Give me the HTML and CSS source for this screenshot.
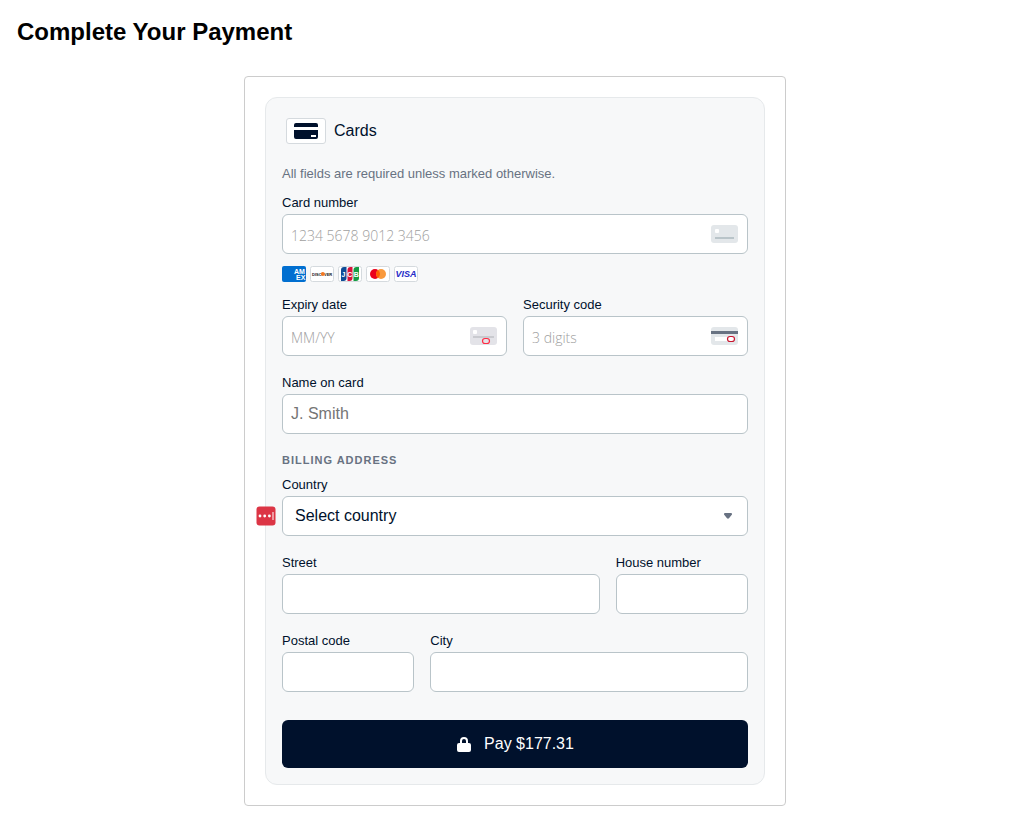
FILE: index.html
```html
<!DOCTYPE html>
<html lang="en">

<head>
    <meta charset="utf-8">
    <title>Complete Your Payment</title>
    <meta name="viewport" content="width=device-width, initial-scale=1">
    <link rel="stylesheet" href="styles.css">
</head>

<body>
    <h1>Complete Your Payment</h1>

    <main class="payment-container">
        <form class="card-panel" action="#" method="post">
            <div class="method-header">
                <span class="method-icon">
                    <svg width="38" height="24" viewBox="0 0 38 24" aria-hidden="true">
                        <path fill="#00112c" d="M7 8V6Q7 4 9 4H29Q31 4 31 6V8zM7 11H31V18Q31 20 29 20H9Q7 20 7 18z" />
                        <path fill="#fff" d="M24 16h5v2h-5z" />
                    </svg>
                </span>
                <h2>Cards</h2>
            </div>

            <p class="form-instruction">All fields are required unless marked otherwise.</p>

            <div class="field">
                <label for="cardNumber">Card number</label>
                <div class="input-wrapper">
                    <input class="secured" id="cardNumber" type="text" inputmode="numeric" placeholder="1234 5678 9012 3456">
                    <svg class="field-icon" width="27" height="18" viewBox="0 0 27 18" aria-hidden="true">
                        <rect width="27" height="18" rx="3" fill="#e3e7ea" />
                        <rect x="4" y="4" width="4" height="4" rx="1" fill="#fff" />
                        <path fill="#b9c4c9" d="M4 12h19v2H4z" />
                    </svg>
                </div>
            </div>

            <div class="brands">
                <svg width="24" height="16" viewBox="0 0 24 16" role="img" aria-label="American Express">
                    <rect width="24" height="16" rx="2" fill="#016fd0" />
                    <g class="amex-text">
                        <text x="12" y="8">AM</text>
                        <text x="14" y="14">EX</text>
                    </g>
                </svg>
                <svg width="24" height="16" viewBox="0 0 24 16" role="img" aria-label="Discover">
                    <rect x=".5" y=".5" width="23" height="15" rx="2" fill="#fff" stroke="#d5dade" />
                    <g class="discover-text">
                        <text x="2" y="9.500">DISC</text>
                        <text x="14" y="9.500">VER</text>
                    </g>
                    <circle cx="12.800" cy="8" r="2" fill="#f47720" />
                </svg>
                <svg width="24" height="16" viewBox="0 0 24 16" role="img" aria-label="JCB">
                    <rect x=".5" y=".5" width="23" height="15" rx="2" fill="#fff" stroke="#d5dade" />
                    <path fill="#0e4c96" d="M3 15V4q0-3 3-3h2.500v11q0 3-3 3z" />
                    <path fill="#d7133b" d="M9.500 15V4q0-3 3-3h2v11q0 3-3 3z" />
                    <path fill="#159b43" d="M15.500 15V4q0-3 3-3h2.500v11q0 3-3 3z" />
                    <g class="jcb-text">
                        <text x="3.500" y="10.500">J</text>
                        <text x="9.300" y="10.500">C</text>
                        <text x="15.700" y="10.500">B</text>
                    </g>
                </svg>
                <svg width="24" height="16" viewBox="0 0 24 16" role="img" aria-label="Mastercard">
                    <rect x=".5" y=".5" width="23" height="15" rx="2" fill="#fff" stroke="#d5dade" />
                    <circle cx="9" cy="8" r="5" fill="#eb001b" />
                    <circle cx="15" cy="8" r="5" fill="#f9993c" />
                    <path fill="#ff5f00" d="M12 4a5 5 0 0 1 0 8 5 5 0 0 1 0-8z" />
                </svg>
                <svg width="24" height="16" viewBox="0 0 24 16" role="img" aria-label="Visa">
                    <rect x=".5" y=".5" width="23" height="15" rx="2" fill="#fff" stroke="#d5dade" />
                    <text class="visa-text" x="12" y="11" text-anchor="middle">VISA</text>
                </svg>
            </div>

            <div class="row halves">
                <div class="field">
                    <label for="expiry">Expiry date</label>
                    <div class="input-wrapper">
                        <input class="secured" id="expiry" type="text" inputmode="numeric" placeholder="MM/YY">
                        <svg class="field-icon" width="27" height="18" viewBox="0 0 27 18" aria-hidden="true">
                            <rect width="27" height="18" rx="3" fill="#e3e3e8" />
                            <rect x="3" y="3" width="4" height="4" rx="1" fill="#fff" />
                            <path fill="#c9cacf" d="M3 9h21v2H3z" />
                            <rect x="12.500" y="11.500" width="7" height="5" rx="2.500" fill="#e3e3e8" stroke="#ff2d45" stroke-width="1.200" />
                        </svg>
                    </div>
                </div>
                <div class="field">
                    <label for="cvc">Security code</label>
                    <div class="input-wrapper">
                        <input class="secured" id="cvc" type="text" inputmode="numeric" placeholder="3 digits">
                        <svg class="field-icon" width="27" height="18" viewBox="0 0 27 18" aria-hidden="true">
                            <rect width="27" height="18" rx="3" fill="#e3e7ea" />
                            <path fill="#687282" d="M0 4h27v3H0z" />
                            <path fill="#fff" d="M4 10h14v4H4z" />
                            <rect x="16.500" y="9.500" width="7" height="5" rx="2.500" fill="#fff" stroke="#c9152f" stroke-width="1.200" />
                        </svg>
                    </div>
                </div>
            </div>

            <div class="field">
                <label for="holderName">Name on card</label>
                <input id="holderName" type="text" placeholder="J. Smith">
            </div>

            <fieldset class="address">
                <legend>Billing address</legend>
                <div class="field">
                    <label for="country">Country</label>
                    <div class="input-wrapper">
                        <select id="country">
                            <option>Select country</option>
                        </select>
                        <svg class="select-arrow" width="8" height="6" viewBox="0 0 8 6" aria-hidden="true">
                            <path fill="#687282" d="M1 0h6q1.500 0 1 1.500L5.200 5Q4 6.500 2.800 5L0 1.500Q-.5 0 1 0z" />
                        </svg>
                        <!-- password manager badge -->
                        <svg class="manager-badge" width="20" height="20" viewBox="0 0 20 20" aria-hidden="true">
                            <rect x=".5" y=".5" width="19" height="19" rx="3" fill="#dc3545" />
                            <g fill="#fff">
                                <circle cx="4" cy="10" r="1.400" />
                                <circle cx="8.700" cy="10" r="1.400" />
                                <circle cx="13.400" cy="10" r="1.400" />
                                <path d="M16.500 6h1v8h-1z" />
                            </g>
                        </svg>
                    </div>
                </div>
                <div class="row wide-first">
                    <div class="field">
                        <label for="street">Street</label>
                        <input id="street" type="text">
                    </div>
                    <div class="field">
                        <label for="houseNumber">House number</label>
                        <input id="houseNumber" type="text">
                    </div>
                </div>
                <div class="row wide-last">
                    <div class="field">
                        <label for="postalCode">Postal code</label>
                        <input id="postalCode" type="text">
                    </div>
                    <div class="field">
                        <label for="city">City</label>
                        <input id="city" type="text">
                    </div>
                </div>
            </fieldset>

            <button class="pay-button" type="submit">
                <svg width="16" height="16" viewBox="0 0 16 16" aria-hidden="true">
                    <path fill="#fff" d="M4 7V5a4 4 0 0 1 8 0v2h1q2 0 2 2v5q0 2-2 2H3q-2 0-2-2V9q0-2 2-2zM6 7h4V5a2 2 0 0 0-4 0z" />
                </svg>
                <span>Pay $177.31</span>
            </button>
        </form>
    </main>
</body>

</html>
```

FILE: styles.css
```css
* {
    box-sizing: border-box;
}

body {
    margin: 16px 17px 16px 16px;
    background: #fff;
    color: #00112c;
    font-family: "Liberation Sans", Arial, sans-serif;
    font-size: 16px;
}

h1 {
    margin: 0 0 28px 1px;
    color: #000;
    font-size: 24px;
    line-height: 32px;
}

.payment-container {
    max-width: 542px;
    margin: 0 auto;
    padding: 20px;
    border: 1px solid #ccc;
    border-radius: 4px;
}

.card-panel {
    display: flex;
    flex-direction: column;
    padding: 20px 16px 16px;
    background: #f7f8f9;
    border: 1px solid #e6e9eb;
    border-radius: 12px;
}

.method-header {
    display: flex;
    align-items: center;
    gap: 8px;
    margin-bottom: 20px;
    padding-left: 4px;
}

.method-header h2 {
    margin: 0;
    font-size: 16px;
    font-weight: 400;
}

.method-icon {
    display: flex;
    background: #fff;
    border: 1px solid #d5dade;
    border-radius: 3px;
}

.form-instruction {
    margin: 0 0 8px;
    color: #687282;
    font-size: 13px;
    line-height: 20px;
}

.field {
    min-width: 0;
    margin-bottom: 16px;
}

.field label {
    display: block;
    font-size: 13px;
    line-height: 22px;
}

.input-wrapper {
    position: relative;
}

input,
select {
    display: block;
    width: 100%;
    height: 40px;
    padding: 4px 8px;
    background: #fff;
    border: 1px solid #b9c4c9;
    border-radius: 6px;
    color: #00112c;
    font-family: inherit;
    font-size: 16px;
}

input::placeholder {
    color: #757575;
    opacity: 1;
}

.secured {
    padding-top: 6px;
    font-family: "Open Sans", sans-serif;
    font-size: 14px;
    font-weight: 300;
}

.secured::placeholder {
    color: #a0a0a0;
}

select {
    appearance: none;
    padding: 0 12px 2px;
}

.field-icon {
    position: absolute;
    top: 11px;
    right: 10px;
}

.select-arrow {
    position: absolute;
    top: 17px;
    right: 16px;
}

.manager-badge {
    position: absolute;
    top: 10px;
    left: -26px;
}

.brands {
    display: flex;
    gap: 4px;
    margin: -4px 0 12px;
}

.brands text {
    font-weight: 700;
}

.amex-text {
    fill: #fff;
    font-size: 7px;
}

.discover-text {
    fill: #151515;
    font-size: 4px;
}

.jcb-text {
    fill: #fff;
    font-size: 7px;
}

.visa-text {
    fill: #252bc8;
    font-size: 9px;
    font-style: italic;
}

.row {
    display: grid;
    gap: 16px;
}

.halves {
    grid-template-columns: 1fr 1fr;
}

.wide-first {
    grid-template-columns: 12fr 5fr;
}

.wide-last {
    grid-template-columns: 5fr 12fr;
}

.address {
    min-width: 0;
    margin: 0;
    padding: 0;
    border: 0;
}

.address legend {
    margin-bottom: 4px;
    padding: 0;
    color: #687282;
    font-size: 11px;
    font-weight: 700;
    letter-spacing: 1px;
    line-height: 20px;
    text-transform: uppercase;
}

.pay-button {
    display: flex;
    align-items: center;
    justify-content: center;
    gap: 12px;
    height: 48px;
    margin-top: 12px;
    background: #00112c;
    border: 0;
    border-radius: 6px;
    color: #fff;
    font-family: inherit;
    font-size: 16px;
    cursor: pointer;
}
```
